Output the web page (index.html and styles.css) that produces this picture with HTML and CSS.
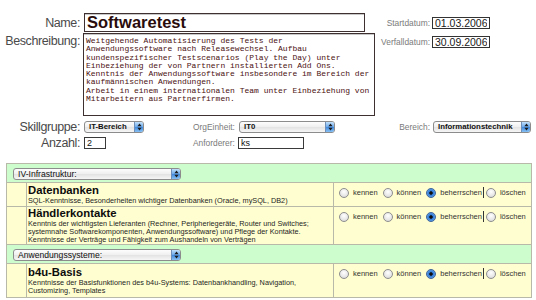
FILE: index.html
```html
<!DOCTYPE html>
<html lang="de">
<head>
<meta charset="utf-8">
<title>Skill bearbeiten</title>
<link rel="stylesheet" href="styles.css">
</head>
<body>
<div class="head">
  <div class="fields">
    <label class="lbl">Name:</label>
    <input class="name" type="text" value="Softwaretest">
    <label class="lbl lbl-top">Beschreibung:</label>
    <textarea class="desc" wrap="off">Weitgehende Automatisierung des Tests der
Anwendungssoftware nach Releasewechsel. Aufbau
kundenspezifischer Testscenarios (Play the Day) unter
Einbeziehung der von Partnern installierten Add Ons.
Kenntnis der Anwendungssoftware insbesondere im Bereich der
kaufmännischen Anwendungen.
Arbeit in einem internationalen Team unter Einbeziehung von
Mitarbeitern aus Partnerfirmen.</textarea>
  </div>
  <div class="dates">
    <label class="small">Startdatum:</label>
    <input class="date" type="text" value="01.03.2006">
    <label class="small">Verfalldatum:</label>
    <input class="date" type="text" value="30.09.2006">
  </div>
</div>

<div class="meta">
  <label class="lbl">Skillgruppe:</label>
  <div><span class="sel bold w-skill"><span class="sel-text">IT-Bereich</span><span class="sel-btn"><svg width="5" height="8" viewBox="0 0 5 8"><path d="M2.5 0.6L4.6 3.2H0.4Z M2.5 7.4L0.4 4.8H4.6Z" fill="#1c1c1c"/></svg></span></span></div>
  <label class="small">OrgEinheit:</label>
  <div><span class="sel bold w-org"><span class="sel-text">IT0</span><span class="sel-btn"><svg width="5" height="8" viewBox="0 0 5 8"><path d="M2.5 0.6L4.6 3.2H0.4Z M2.5 7.4L0.4 4.8H4.6Z" fill="#1c1c1c"/></svg></span></span></div>
  <label class="small right">Bereich:</label>
  <div><span class="sel bold w-ber"><span class="sel-text">Informationstechnik</span><span class="sel-btn"><svg width="5" height="8" viewBox="0 0 5 8"><path d="M2.5 0.6L4.6 3.2H0.4Z M2.5 7.4L0.4 4.8H4.6Z" fill="#1c1c1c"/></svg></span></span></div>
  <label class="lbl">Anzahl:</label>
  <div><input class="box w-anz" type="text" value="2"></div>
  <label class="small">Anforderer:</label>
  <div><input class="box w-anf" type="text" value="ks"></div>
</div>

<table class="skills">
  <colgroup><col class="c-mark"><col class="c-info"><col class="c-opts"></colgroup>
  <tr class="grp">
    <td colspan="3"><span class="sel w-grp"><span class="sel-text">IV-Infrastruktur:</span><span class="sel-btn"><svg width="5" height="8" viewBox="0 0 5 8"><path d="M2.5 0.6L4.6 3.2H0.4Z M2.5 7.4L0.4 4.8H4.6Z" fill="#1c1c1c"/></svg></span></span></td>
  </tr>
  <tr class="skill r-db">
    <td class="mark"></td>
    <td class="info">
      <div class="title">Datenbanken</div>
      <div class="text">SQL-Kenntnisse, Besonderheiten wichtiger Datenbanken (Oracle, mySQL, DB2)</div>
    </td>
    <td class="opts-cell">
      <div class="opts">
        <span class="opt"><span class="radio"></span>kennen</span>
        <span class="opt"><span class="radio"></span>können</span>
        <span class="opt"><span class="radio on"></span>beherrschen</span>
        <span class="bar"></span>
        <span class="opt"><span class="radio"></span>löschen</span>
      </div>
    </td>
  </tr>
  <tr class="skill">
    <td class="mark"></td>
    <td class="info">
      <div class="title">Händlerkontakte</div>
      <div class="text">Kenntnis der wichtigsten Lieferanten (Rechner, Peripheriegeräte, Router und Switches;<br>systemnahe Softwarekomponenten, Anwendungssoftware) und Pflege der Kontakte.<br>Kenntnisse der Verträge und Fähigkeit zum Aushandeln von Verträgen</div>
    </td>
    <td class="opts-cell">
      <div class="opts">
        <span class="opt"><span class="radio"></span>kennen</span>
        <span class="opt"><span class="radio"></span>können</span>
        <span class="opt"><span class="radio on"></span>beherrschen</span>
        <span class="bar"></span>
        <span class="opt"><span class="radio"></span>löschen</span>
      </div>
    </td>
  </tr>
  <tr class="grp">
    <td colspan="3"><span class="sel w-grp"><span class="sel-text">Anwendungssysteme:</span><span class="sel-btn"><svg width="5" height="8" viewBox="0 0 5 8"><path d="M2.5 0.6L4.6 3.2H0.4Z M2.5 7.4L0.4 4.8H4.6Z" fill="#1c1c1c"/></svg></span></span></td>
  </tr>
  <tr class="skill r-b4u">
    <td class="mark"></td>
    <td class="info">
      <div class="title">b4u-Basis</div>
      <div class="text">Kenntnisse der Basisfunktionen des b4u-Systems: Datenbankhandling, Navigation,<br>Customizing, Templates</div>
    </td>
    <td class="opts-cell">
      <div class="opts">
        <span class="opt"><span class="radio"></span>kennen</span>
        <span class="opt"><span class="radio"></span>können</span>
        <span class="opt"><span class="radio on"></span>beherrschen</span>
        <span class="bar"></span>
        <span class="opt"><span class="radio"></span>löschen</span>
      </div>
    </td>
  </tr>
</table>
</body>
</html>
```
FILE: styles.css
```css
* {
    margin: 0;
    padding: 0;
    box-sizing: border-box;
}

body {
    background: #fff;
    font-family: "Liberation Sans", Arial, sans-serif;
    color: #111;
}

/* labels */
.lbl {
    font-size: 12.5px;
    letter-spacing: -0.4px;
    color: #4a4a4a;
    text-align: right;
    padding-right: 3px;
    line-height: 14px;
}

.lbl-top {
    align-self: start;
    margin-top: 1px;
}

.small {
    font-size: 8.4px;
    color: #7a7a7a;
    line-height: 10px;
}

.right {
    text-align: right;
    padding-right: 3px;
}

/* top part */
.head {
    display: flex;
    padding-top: 13px;
}

.fields {
    display: grid;
    grid-template-columns: 83px 292px;
    row-gap: 1px;
    align-items: center;
}

.name {
    width: 281px;
    height: 19px;
    margin-left: 1px;
    border: 1px solid #3e3030;
    box-shadow: inset 0 1px 0 #c8c8c8;
    padding: 0 2px;
    font: bold 16.5px "Liberation Sans", Arial, sans-serif;
    color: #2a0c0c;
    outline: none;
}

.desc {
    width: 292px;
    height: 83px;
    border: 1px solid #3e3030;
    box-shadow: inset 0 1px 0 #c8c8c8;
    padding: 3px 2px;
    font: 8px/8.3px "Liberation Mono", "Courier New", monospace;
    color: #4b1010;
    resize: none;
    overflow: hidden;
    outline: none;
}

.dates {
    display: grid;
    grid-template-columns: 52px 58px;
    column-gap: 2px;
    row-gap: 7px;
    margin-left: 3px;
    padding-top: 4px;
    align-items: center;
    align-content: start;
}

.dates .small {
    text-align: right;
}

.date {
    width: 58px;
    height: 12px;
    border: 1px solid #333;
    padding: 0 2px;
    font: 10.5px/10px "Liberation Sans", Arial, sans-serif;
    color: #1a1a1a;
    outline: none;
}

/* second part */
.meta {
    display: grid;
    grid-template-columns: 84px 109px 46px 159px 35px 98px;
    grid-template-rows: 14px 14px;
    row-gap: 2px;
    margin-top: 4px;
    align-items: center;
}

.meta .lbl {
    padding-right: 4px;
}

.meta > div {
    display: flex;
    align-items: center;
}

.box {
    height: 12px;
    border: 1px solid #3a3a3a;
    padding: 0 2px;
    font: 9px/10px "Liberation Sans", Arial, sans-serif;
    color: #111;
    outline: none;
}

.w-anz { width: 22px; }
.w-anf { width: 66px; margin-left: -1px; }

/* aqua style select */
.sel {
    display: inline-flex;
    height: 12px;
    border: 1px solid #8c8c8c;
    border-radius: 3px;
    background: linear-gradient(#fdfdfd, #efefef 50%, #e2e2e2 50%, #f6f6f6);
    font-size: 8.6px;
    color: #111;
    overflow: hidden;
}

.sel.bold {
    font-weight: bold;
    font-size: 7.8px;
}

.sel-text {
    flex: 1;
    padding-left: 4px;
    line-height: 10px;
    white-space: nowrap;
}

.sel-btn {
    width: 9px;
    display: flex;
    align-items: center;
    justify-content: center;
    background: linear-gradient(#c2e1fb, #6aa9ec 50%, #3f87dc 50%, #86c0f4);
    border-left: 1px solid #6f8fb8;
}

.w-skill { width: 60px; }
.w-org { width: 96px; }
.w-ber { width: 98px; }
.w-grp { width: 168px; }

/* skill table */
.skills {
    margin: 13px 0 0 6px;
    width: 526px;
    table-layout: fixed;
    border-collapse: collapse;
    border: 1px solid #a6a6a6;
}

.c-mark { width: 20px; }
.c-info { width: 307px; }

.skills td {
    border: 1px solid #b9b9aa;
}

.grp td {
    background: #cdfdcd;
    padding: 4px 6px 2px;
    line-height: 0;
}

.skill td {
    background: #fffed0;
}

.r-db td { height: 24px; }
.r-b4u td { height: 34px; }

.info {
    padding: 0 1px;
    vertical-align: middle;
}

.title {
    font-size: 11.3px;
    font-weight: bold;
    line-height: 12.6px;
    color: #0c0c0c;
}

.text {
    font-size: 7.3px;
    line-height: 8.3px;
    color: #1e1e1e;
    white-space: nowrap;
}

.opts-cell {
    vertical-align: top;
    padding: 4px 0 0 5px;
}

.opts {
    display: flex;
    align-items: center;
    gap: 5px;
}

.opt {
    display: flex;
    align-items: center;
    gap: 4px;
    font-size: 7.5px;
    color: #333;
}

.radio {
    width: 10px;
    height: 10px;
    border-radius: 50%;
    border: 1px solid #8e8e8e;
    background: radial-gradient(circle at 50% 35%, #ffffff, #e4e4e4 65%, #c9c9c9);
}

.radio.on {
    border-color: #44689a;
    background: radial-gradient(circle, #101010 0 1.4px, #2d78d4 2px, #7db9f3 100%);
}

.bar {
    width: 1px;
    height: 11px;
    background: #333;
    margin: 0 -3px 0 -4px;
}
```
